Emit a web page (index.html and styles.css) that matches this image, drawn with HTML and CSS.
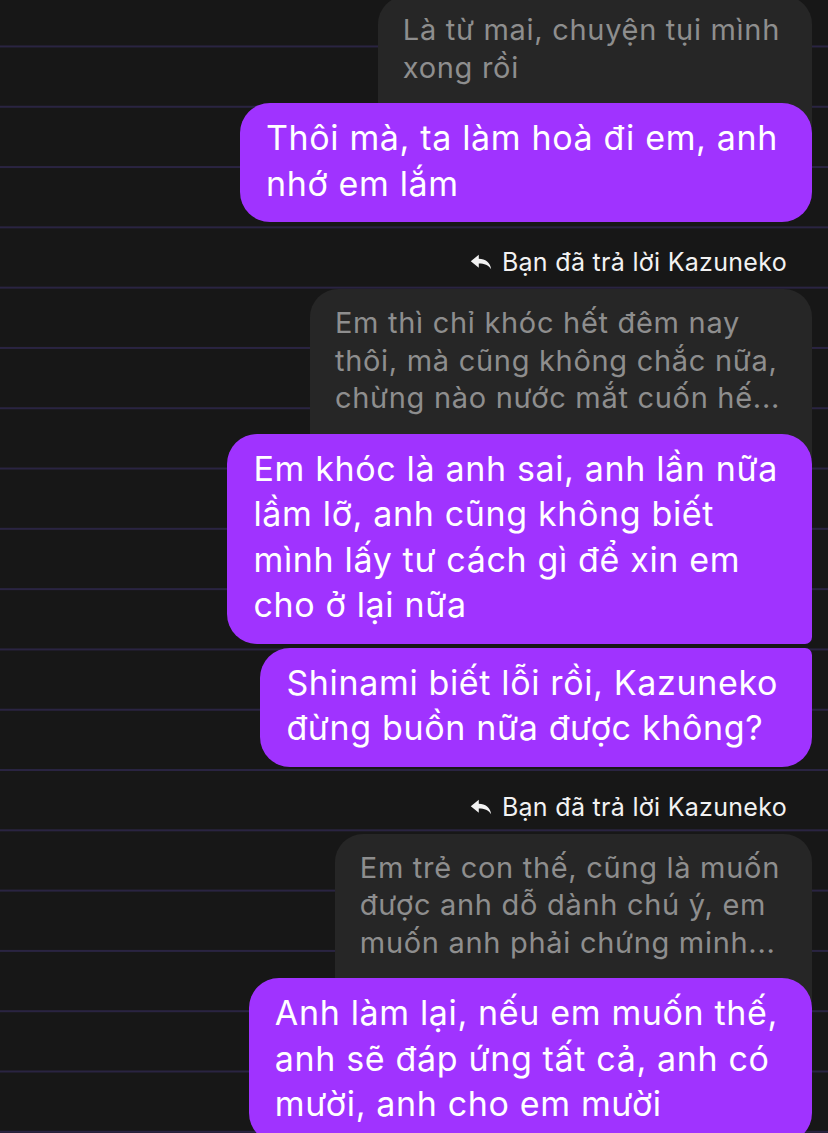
FILE: index.html
```html
<!DOCTYPE html>
<html lang="vi">
<head>
  <meta charset="UTF-8" />
  <meta name="viewport" content="width=device-width, initial-scale=1.0" />
  <title>Kazuneko</title>
  <link rel="stylesheet" href="styles.css">
</head>
<body>
  <div class="chat">
    <div class="group first">
      <div class="quote">Là từ mai, chuyện tụi mình<br>xong rồi</div>
      <div class="bubble">Thôi mà, ta làm hoà đi em, anh<br>nhớ em lắm</div>
    </div>

    <div class="group">
      <div class="replied">
        <svg viewBox="0 0 24 18" width="22" height="16"><path d="M0.5 8.2 L9.5 0.8 V5.4 C17 5.6 22.4 9.6 23.4 17.2 C20.4 12.6 15.8 10.8 9.5 10.8 V15.6 Z" fill="#f2f2f2"/></svg>
        Bạn đã trả lời Kazuneko
      </div>
      <div class="quote">Em thì chỉ khóc hết đêm nay<br>thôi, mà cũng không chắc nữa,<br>chừng nào nước mắt cuốn hế...</div>
      <div class="bubble top">Em khóc là anh sai, anh lần nữa<br>lầm lỡ, anh cũng không biết<br>mình lấy tư cách gì để xin em<br>cho ở lại nữa</div>
      <div class="bubble bottom">Shinami biết lỗi rồi, Kazuneko<br>đừng buồn nữa được không?</div>
    </div>

    <div class="group">
      <div class="replied">
        <svg viewBox="0 0 24 18" width="22" height="16"><path d="M0.5 8.2 L9.5 0.8 V5.4 C17 5.6 22.4 9.6 23.4 17.2 C20.4 12.6 15.8 10.8 9.5 10.8 V15.6 Z" fill="#f2f2f2"/></svg>
        Bạn đã trả lời Kazuneko
      </div>
      <div class="quote">Em trẻ con thế, cũng là muốn<br>được anh dỗ dành chú ý, em<br>muốn anh phải chứng minh...</div>
      <div class="bubble">Anh làm lại, nếu em muốn thế,<br>anh sẽ đáp ứng tất cả, anh có<br>mười, anh cho em mười</div>
    </div>
  </div>
</body>
</html>
```

FILE: styles.css
```css
html, body {
  margin: 0;
  height: 100%;
  overflow: hidden;
}
body {
  font-family: Inter, "Noto Sans", sans-serif;
  background-color: #171717;
  background-image: linear-gradient(to bottom, transparent 45px, #2a2442 45px, #2a2442 47px, transparent 47px);
  background-size: 100% 60.3px;
}
.chat {
  padding: 0 16px 0 0;
  display: flex;
  flex-direction: column;
}
.group {
  display: flex;
  flex-direction: column;
  align-items: flex-end;
}
.group.first {
  margin-top: -4px;
}
.quote {
  background: #262626;
  color: #8e8e8e;
  font-size: 29px;
  letter-spacing: 0.7px;
  line-height: 37.5px;
  white-space: nowrap;
  padding: 15px 32px 40px 25px;
  border-radius: 28px 28px 0 0;
}
.bubble {
  background: #a033ff;
  color: #fff;
  font-size: 34px;
  letter-spacing: 0.65px;
  line-height: 45.5px;
  white-space: nowrap;
  padding: 12px 34px 16px 26px;
  border-radius: 30px;
  margin-top: -23px;
  position: relative;
}
.bubble.top {
  border-bottom-right-radius: 7px;
}
.bubble.bottom {
  margin-top: 4px;
  border-top-right-radius: 7px;
}
.replied {
  display: flex;
  align-items: center;
  gap: 10px;
  color: #f2f2f2;
  font-size: 25px;
  letter-spacing: 0.3px;
  line-height: 30px;
  margin: 25px 25px 12px 0;
}
```
